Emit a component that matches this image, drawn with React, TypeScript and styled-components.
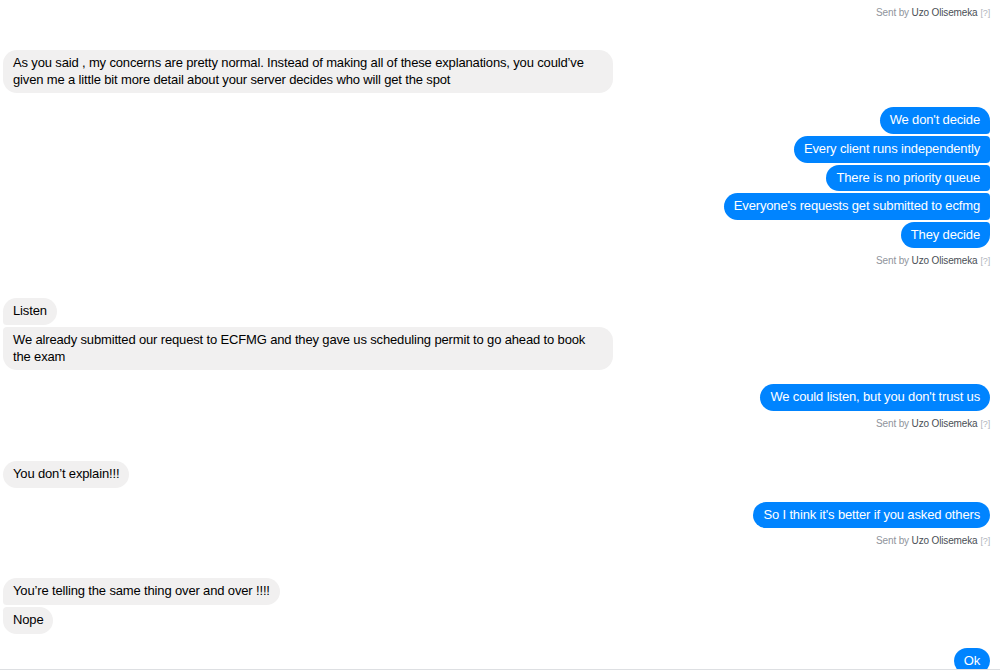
import React from "react";
import styled, { createGlobalStyle, css } from "styled-components";

const Global = createGlobalStyle`
  html, body { margin: 0; padding: 0; background: #fff; }
  body { font-family: "Liberation Sans", Arial, sans-serif; -webkit-font-smoothing: antialiased; }
`;

const Page = styled.div`
  width: 1000px;
  height: 672px;
  display: flex;
  flex-direction: column;
  overflow: hidden;
`;

const Thread = styled.div`
  height: 670px;
  overflow: hidden;
  padding: 0 10px 0 3px;
  box-sizing: border-box;
  display: flex;
  flex-direction: column;
  border-bottom: 1px solid #dddfe2;
`;

const Group = styled.div<{ $mine?: boolean }>`
  display: flex;
  flex-direction: column;
  align-items: ${(p) => (p.$mine ? "flex-end" : "flex-start")};
  gap: 2px;
  margin-top: 14px;
  &:first-child { margin-top: 0; }
`;

type Pos = "single" | "first" | "middle" | "last";

const Bubble = styled.div<{ $mine?: boolean; $pos: Pos }>`
  box-sizing: border-box;
  max-width: 610px;
  padding: 5px 10px;
  font-size: 13px;
  line-height: 16.64px;
  letter-spacing: -0.15px;
  border-radius: 14px;
  white-space: normal;
  ${(p) =>
    p.$mine
      ? css`
          background: #0084ff;
          color: #fff;
          ${p.$pos === "first" && "border-bottom-right-radius: 4px;"}
          ${p.$pos === "middle" && "border-top-right-radius: 4px; border-bottom-right-radius: 4px;"}
          ${p.$pos === "last" && "border-top-right-radius: 4px;"}
        `
      : css`
          background: #f1f0f0;
          color: #000;
          ${p.$pos === "first" && "border-bottom-left-radius: 4px;"}
          ${p.$pos === "middle" && "border-top-left-radius: 4px; border-bottom-left-radius: 4px;"}
          ${p.$pos === "last" && "border-top-left-radius: 4px;"}
        `}
`;

const SentBy = styled.div`
  align-self: flex-end;
  margin-top: 6px;
  margin-bottom: 16px;
  font-size: 10px;
  line-height: 13px;
  letter-spacing: -0.15px;
  color: #90949c;
  white-space: nowrap;
`;

const Name = styled.span`
  color: #4b4f56;
`;

const Help = styled.span`
  color: #b0b4bb;
  font-size: 9px;
  line-height: 13px;
  margin-left: 3px;
`;

type Msg = { mine: boolean; texts: string[] };

const data: (Msg | "sent")[] = [
  "sent",
  {
    mine: false,
    texts: [
      "As you said , my concerns are pretty normal. Instead of making all of these explanations, you could\u2019ve given me a little bit more detail about your server decides who will get the spot",
    ],
  },
  {
    mine: true,
    texts: [
      "We don't decide",
      "Every client runs independently",
      "There is no priority queue",
      "Everyone's requests get submitted to ecfmg",
      "They decide",
    ],
  },
  "sent",
  {
    mine: false,
    texts: [
      "Listen",
      "We already submitted our request to ECFMG and they gave us scheduling permit to go ahead to book the exam",
    ],
  },
  { mine: true, texts: ["We could listen, but you don't trust us"] },
  "sent",
  { mine: false, texts: ["You don\u2019t explain!!!"] },
  { mine: true, texts: ["So I think it's better if you asked others"] },
  "sent",
  { mine: false, texts: ["You\u2019re telling the same thing over and over !!!!", "Nope"] },
  { mine: true, texts: ["Ok"] },
];

const posOf = (i: number, n: number): Pos =>
  n === 1 ? "single" : i === 0 ? "first" : i === n - 1 ? "last" : "middle";

export default function App() {
  return (
    <Page>
      <Global />
      <Thread>
        {data.map((item, k) =>
          item === "sent" ? (
            <SentBy key={k}>
              Sent by <Name>Uzo Olisemeka</Name>
              <Help>[?]</Help>
            </SentBy>
          ) : (
            <Group key={k} $mine={item.mine}>
              {item.texts.map((t, i) => (
                <Bubble key={i} $mine={item.mine} $pos={posOf(i, item.texts.length)}>
                  {t}
                </Bubble>
              ))}
            </Group>
          )
        )}
      </Thread>
    </Page>
  );
}
